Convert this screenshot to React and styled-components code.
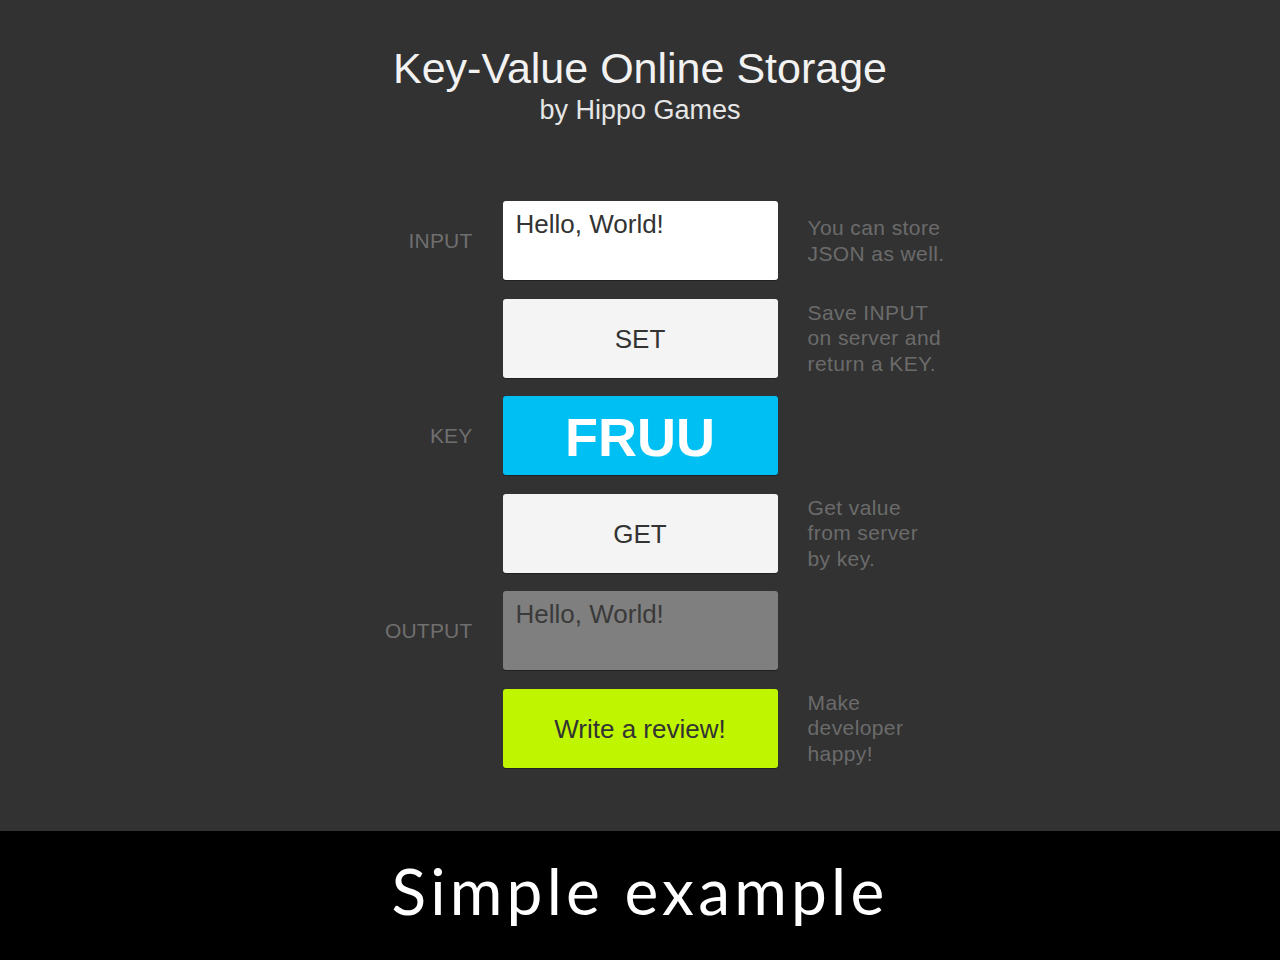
import React from "react"
import styled, { createGlobalStyle } from "styled-components"

const GlobalStyle = createGlobalStyle`
  html, body {
    margin: 0;
    padding: 0;
    background: #323232;
    font-family: "Liberation Sans", Arial, sans-serif;
  }
`

const rows = [
  { label: "INPUT", kind: "input", text: "Hello, World!", note: ["You can store", "JSON as well."] },
  { kind: "button", text: "SET", note: ["Save INPUT", "on server and", "return a KEY."] },
  { label: "KEY", kind: "key", text: "FRUU" },
  { kind: "button", text: "GET", note: ["Get value", "from server", "by key."] },
  { label: "OUTPUT", kind: "output", text: "Hello, World!" },
  { kind: "review", text: "Write a review!", note: ["Make", "developer", "happy!"] },
]

const App = () => (
  <>
    <GlobalStyle />
    <Screen>
      <Header>
        <Title>Key-Value Online Storage</Title>
        <Subtitle>by Hippo Games</Subtitle>
      </Header>
      <Grid>
        {rows.map((row, i) => (
          <React.Fragment key={i}>
            <Label>{row.label}</Label>
            {row.kind === "input" || row.kind === "output"
              ? <Field $kind={row.kind}>{row.text}</Field>
              : <Button $kind={row.kind}>{row.text}</Button>}
            <Note>
              {(row.note || []).map((line, j) => <span key={j}>{line}</span>)}
            </Note>
          </React.Fragment>
        ))}
      </Grid>
    </Screen>
    <Caption>
      <CaptionText>Simple example</CaptionText>
    </Caption>
  </>
)

export default App

const Screen = styled.main`
  height: 831px;
  box-sizing: border-box;
  padding-top: 43px;
  background: #323232;
  display: flex;
  flex-direction: column;
  align-items: stretch;
`

const Header = styled.header`
  display: flex;
  flex-direction: column;
  align-items: center;
`

const Title = styled.h1`
  margin: 0;
  font-weight: normal;
  font-size: 43px;
  line-height: 50px;
  color: #f2f2f2;
`

const Subtitle = styled.p`
  margin: 2px 0 0;
  font-size: 27px;
  line-height: 31px;
  color: #e6e6e6;
`

const Grid = styled.section`
  margin-top: 75px;
  display: grid;
  grid-template-columns: 1fr 275px 1fr;
  grid-auto-rows: 79px;
  column-gap: 30px;
  row-gap: 18.5px;
`

const Label = styled.div`
  display: flex;
  align-items: center;
  justify-content: flex-end;
  font-size: 21px;
  letter-spacing: 0.2px;
  color: #6f6f6f;
`

const boxColors = {
  input: { bg: "#ffffff", fg: "#333333" },
  output: { bg: "#7f7f7f", fg: "#3a3a3a" },
  button: { bg: "#f4f4f4", fg: "#333333" },
  key: { bg: "#00bff2", fg: "#ffffff" },
  review: { bg: "#c0f500", fg: "#333333" },
}

const Box = styled.div`
  box-sizing: border-box;
  border-radius: 3px;
  background: ${p => boxColors[p.$kind].bg};
  color: ${p => boxColors[p.$kind].fg};
  box-shadow: 0 1px 0 rgba(0, 0, 0, 0.35);
  font-size: 26px;
`

const Field = styled(Box)`
  padding: 8px 13px 0;
  line-height: 30px;
`

const Button = styled(Box)`
  display: flex;
  align-items: center;
  justify-content: center;
  padding-top: 2px;
  font-size: ${p => (p.$kind === "key" ? "54px" : "26px")};
  font-weight: ${p => (p.$kind === "key" ? "bold" : "normal")};
`

const Note = styled.div`
  display: flex;
  flex-direction: column;
  justify-content: center;
  font-size: 21px;
  line-height: 25.5px;
  letter-spacing: 0.4px;
  color: #6b6b6b;

  span {
    white-space: nowrap;
  }
`

const Caption = styled.footer`
  height: 129px;
  background: #000;
  display: flex;
  align-items: center;
  justify-content: center;
  padding-bottom: 10px;
  box-sizing: border-box;
`

const CaptionText = styled.div`
  font-family: Lato, "Noto Sans", sans-serif;
  font-size: 64px;
  letter-spacing: 4.2px;
  color: #ffffff;
`
